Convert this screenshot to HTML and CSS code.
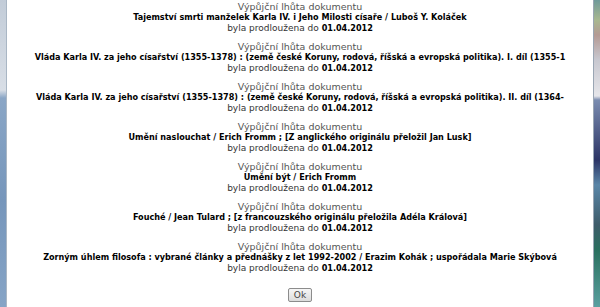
FILE: index.html
```html
<!DOCTYPE html>
<html lang="cs">

<head>
    <meta charset="UTF-8">
    <title>Prodloužení výpůjček</title>
    <link rel="stylesheet" href="styles.css">
</head>

<body>
    <div class="frame">
        <div class="frame-left"></div>

        <main class="content">
            <div class="item">
                <p class="label">Výpůjční lhůta dokumentu</p>
                <p class="title">Tajemství smrti manželek Karla IV. i Jeho Milosti císaře / Luboš Y. Koláček</p>
                <p class="due">byla prodloužena do <b>01.04.2012</b></p>
            </div>
            <div class="item">
                <p class="label">Výpůjční lhůta dokumentu</p>
                <p class="title">Vláda Karla IV. za jeho císařství (1355-1378) : (země české Koruny, rodová, říšská a evropská politika). I. díl (1355-1</p>
                <p class="due">byla prodloužena do <b>01.04.2012</b></p>
            </div>
            <div class="item">
                <p class="label">Výpůjční lhůta dokumentu</p>
                <p class="title">Vláda Karla IV. za jeho císařství (1355-1378) : (země české Koruny, rodová, říšská a evropská politika). II. díl (1364-</p>
                <p class="due">byla prodloužena do <b>01.04.2012</b></p>
            </div>
            <div class="item">
                <p class="label">Výpůjční lhůta dokumentu</p>
                <p class="title">Umění naslouchat / Erich Fromm ; [Z anglického originálu přeložil Jan Lusk]</p>
                <p class="due">byla prodloužena do <b>01.04.2012</b></p>
            </div>
            <div class="item">
                <p class="label">Výpůjční lhůta dokumentu</p>
                <p class="title">Umění být / Erich Fromm</p>
                <p class="due">byla prodloužena do <b>01.04.2012</b></p>
            </div>
            <div class="item">
                <p class="label">Výpůjční lhůta dokumentu</p>
                <p class="title">Fouché / Jean Tulard ; [z francouzského originálu přeložila Adéla Králová]</p>
                <p class="due">byla prodloužena do <b>01.04.2012</b></p>
            </div>
            <div class="item">
                <p class="label">Výpůjční lhůta dokumentu</p>
                <p class="title">Zorným úhlem filosofa : vybrané články a přednášky z let 1992-2002 / Erazim Kohák ; uspořádala Marie Skýbová</p>
                <p class="due">byla prodloužena do <b>01.04.2012</b></p>
            </div>

            <div class="actions">
                <button class="ok-button">Ok</button>
            </div>
        </main>

        <div class="frame-right"></div>
    </div>
</body>

</html>
```

FILE: styles.css
```css
html,
body {
    margin: 0;
    padding: 0;
    height: 100%;
    overflow: hidden;
}

body {
    font-family: 'DejaVu Sans Condensed', 'DejaVu Sans', Verdana, sans-serif;
    font-stretch: condensed;
    font-size: 9px;
    background: #ffffff;
    color: #000;
}

.frame {
    display: flex;
    height: 100%;
}

/* okraje okna */
.frame-left {
    width: 6px;
    flex-shrink: 0;
    background: linear-gradient(180deg, #c2ccd8 0, #d8dee6 90px, #8aa6c6 98px, #7696bb 200px, #86a4c6 307px);
    border-right: 1px solid #a9b6c4;
}

.frame-right {
    width: 6px;
    flex-shrink: 0;
    background: linear-gradient(180deg, #6f9a9a 0, #a8b890 20px, #b49a94 35px, #c8c8d0 60px, #e6e6ea 96px, #7a8cb0 100px, #2c3566 160px, #5a86a8 185px, #3e5c6a 225px, #2a7060 250px, #5aa0a0 307px);
    border-left: 1px solid #9aa6b4;
}

.content {
    flex: 1;
    padding: 1px 0 0;
    text-align: center;
    overflow: hidden;
}

.item {
    height: 33px;
    margin-bottom: 7px;
}

.item p {
    margin: 0;
    height: 11px;
    line-height: 11px;
    white-space: nowrap;
}

.label,
.due {
    font-family: 'DejaVu Sans', Verdana, sans-serif;
    font-stretch: normal;
}

.label {
    font-size: 9.5px;
    color: #555;
}

.title {
    font-weight: bold;
    color: #000;
}

.due {
    font-size: 9px;
    color: #333;
}

.due b {
    color: #000;
    line-height: 1;
    font-family: 'DejaVu Sans Condensed', 'DejaVu Sans', sans-serif;
    font-stretch: condensed;
}

.actions {
    padding-top: 7px;
}

.ok-button {
    font-family: 'DejaVu Sans', Verdana, sans-serif;
    font-size: 9px;
    color: #444;
    width: 24px;
    height: 14px;
    padding: 0;
    border: 1px solid #8c8c8c;
    border-radius: 2px;
    background: linear-gradient(180deg, #f6f6f6, #dcdcdc);
}
```
